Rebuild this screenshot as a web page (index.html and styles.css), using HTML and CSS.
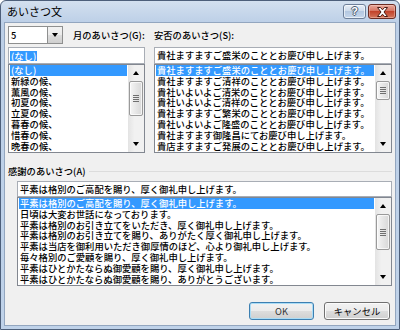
FILE: index.html
```html
<!DOCTYPE html>
<html lang="ja">
<head>
<meta charset="utf-8">
<title>あいさつ文</title>
<link rel="stylesheet" href="styles.css">
</head>
<body>
<div class="window">
  <div class="titlebar">
    <span class="title">あいさつ文</span>
    <div class="caption-btns">
      <div class="cap-btn help"><span class="q">?</span></div>
      <div class="cap-btn close">
        <svg width="13" height="10" viewBox="0 0 13 10"><path d="M1.5 0.5h3l2 2.3 2-2.3h3l-3.5 4.5 3.5 4.5h-3l-2-2.3-2 2.3h-3l3.5-4.5z" fill="#fff" stroke="#4a1a12" stroke-width="1"/></svg>
      </div>
    </div>
  </div>
  <div class="client">
    <div class="top">
      <div class="col">
        <div class="row1">
          <div class="combo"><span class="combo-val">5</span><span class="drop"><i class="tri-down"></i></span></div>
          <span class="label ml">月のあいさつ(G):</span>
        </div>
        <div class="textbox"><span class="sel">(なし)</span></div>
        <div class="listbox">
          <ul class="items">
            <li class="selected">(なし)</li>
            <li>新緑の候、</li>
            <li>薫風の候、</li>
            <li>初夏の候、</li>
            <li>立夏の候、</li>
            <li>暮春の候、</li>
            <li>惜春の候、</li>
            <li>晩春の候、</li>
          </ul>
          <div class="scrollbar">
            <div class="arrow"><i class="tri-up"></i></div>
            <div class="track"><div class="thumb" style="height:35px"><i class="grip"></i></div></div>
            <div class="arrow"><i class="tri-down"></i></div>
          </div>
        </div>
      </div>
      <div class="col">
        <div class="row1">
          <span class="label">安否のあいさつ(S):</span>
        </div>
        <div class="textbox"><span class="txt">貴社ますますご盛栄のこととお慶び申し上げます。</span></div>
        <div class="listbox">
          <ul class="items">
            <li class="selected">貴社ますますご盛栄のこととお慶び申し上げます。</li>
            <li>貴社ますますご清祥のこととお慶び申し上げます。</li>
            <li>貴社いよいよご清栄のこととお慶び申し上げます。</li>
            <li>貴社いよいよご清祥のこととお慶び申し上げます。</li>
            <li>貴社ますますご繁栄のこととお慶び申し上げます。</li>
            <li>貴社いよいよご隆盛のこととお慶び申し上げます。</li>
            <li>貴社ますます御隆昌にてお慶び申し上げます。</li>
            <li>貴店ますますご発展のこととお慶び申し上げます。</li>
          </ul>
          <div class="scrollbar">
            <div class="arrow"><i class="tri-up"></i></div>
            <div class="track"><div class="thumb" style="height:19px"><i class="grip"></i></div></div>
            <div class="arrow"><i class="tri-down"></i></div>
          </div>
        </div>
      </div>
    </div>

    <div class="section-head">
      <span class="label">感謝のあいさつ(A)</span>
      <span class="rule"></span>
    </div>
    <div class="section-body">
      <div class="textbox wide"><span class="txt">平素は格別のご高配を賜り、厚く御礼申し上げます。</span></div>
      <div class="listbox wide">
        <ul class="items">
          <li class="selected">平素は格別のご高配を賜り、厚く御礼申し上げます。</li>
          <li>日頃は大変お世話になっております。</li>
          <li>平素は格別のお引き立てをいただき、厚く御礼申し上げます。</li>
          <li>平素は格別のお引き立てを賜り、ありがたく厚く御礼申し上げます。</li>
          <li>平素は当店を御利用いただき御厚情のほど、心より御礼申し上げます。</li>
          <li>毎々格別のご愛顧を賜り、厚く御礼申し上げます。</li>
          <li>平素はひとかたならぬ御愛顧を賜り、厚く御礼申し上げます。</li>
          <li>平素はひとかたならぬ御愛顧を賜り、ありがとうございます。</li>
        </ul>
        <div class="scrollbar">
          <div class="arrow"><i class="tri-up"></i></div>
          <div class="track"><div class="thumb" style="height:36px"><i class="grip"></i></div></div>
          <div class="arrow"><i class="tri-down"></i></div>
        </div>
      </div>
    </div>

    <div class="buttons">
      <div class="btn default">OK</div>
      <div class="btn">キャンセル</div>
    </div>
  </div>
</div>
</body>
</html>
```
FILE: styles.css
```css
* { box-sizing: border-box; }
html, body { margin: 0; padding: 0; }
body {
  width: 400px;
  height: 330px;
  overflow: hidden;
  background: #ffffff;
  font-family: "Noto Sans CJK JP", "Liberation Sans", sans-serif;
  font-size: 9.3px;
  font-weight: 500;
  color: #000;
}
.window {
  width: 400px;
  height: 330px;
  border: 1px solid #4d5f7a;
  border-radius: 6px 6px 0 0;
  background: linear-gradient(#d3e0ef, #bccfe7 22px, #bfd2e9);
  padding: 0 3px 3px 3px;
  display: flex;
  flex-direction: column;
}
.titlebar {
  height: 21px;
  flex: none;
  display: flex;
  align-items: flex-start;
  justify-content: space-between;
  padding-left: 3px;
}
.title {
  font-size: 11px;
  line-height: 11px;
  font-weight: 400;
  margin-top: 5px;
}
.caption-btns {
  display: flex;
  gap: 2px;
  margin-top: 3px;
}
.cap-btn {
  height: 15px;
  border-radius: 3px;
  display: flex;
  align-items: center;
  justify-content: center;
}
.help {
  width: 23px;
  border: 1px solid #6d7f99;
  background: linear-gradient(#e7eef7, #cbd9ea 50%, #b4c8e1 50%, #c6d7ec);
  box-shadow: inset 0 0 0 1px rgba(255,255,255,0.6);
}
.q {
  font-family: "Liberation Sans", sans-serif;
  font-weight: bold;
  font-size: 11px;
  line-height: 11px;
  color: #fff;
  text-shadow: 1px 0 0 #4b5a70, -1px 0 0 #4b5a70, 0 1px 0 #4b5a70, 0 -1px 0 #4b5a70;
}
.close {
  width: 28px;
  border: 1px solid #6b2b22;
  background: linear-gradient(#e7a99c, #d4705d 50%, #c2432b 50%, #d2765c);
  box-shadow: inset 0 0 0 1px rgba(255,220,210,0.4);
}
.client {
  flex: 1;
  background: #f0f0f0;
  border: 1px solid #93a6bf;
  padding: 3px 3px 0 3px;
  display: flex;
  flex-direction: column;
}
.top {
  display: grid;
  grid-template-columns: 137px 238px;
  column-gap: 9px;
}
.col { display: flex; flex-direction: column; }
.row1 {
  height: 18px;
  display: flex;
  align-items: center;
}
.label { line-height: 11px; white-space: nowrap; }
.ml { margin-left: 10px; }
.combo {
  width: 55px;
  height: 18px;
  border: 1px solid #8e8f8f;
  background: #fff;
  display: flex;
  align-items: center;
}
.combo-val { flex: 1; padding-left: 2px; line-height: 11px; }
.drop {
  width: 15px;
  height: 16px;
  border-left: 1px solid #8e8f8f;
  background: linear-gradient(#f2f2f2, #ebebeb 50%, #dddddd 50%, #cfcfcf);
  display: flex;
  align-items: center;
  justify-content: center;
}
.tri-down, .tri-up {
  display: block;
  width: 0;
  height: 0;
  border-left: 3.5px solid transparent;
  border-right: 3.5px solid transparent;
}
.tri-down { border-top: 4px solid #000; }
.tri-up { border-bottom: 4px solid #000; }
.textbox {
  margin-top: 3px;
  height: 17px;
  border: 1px solid #a8adb5;
  background: #fff;
  padding-left: 1px;
  display: flex;
  align-items: center;
  white-space: nowrap;
  overflow: hidden;
}
.txt { padding-left: 1px; line-height: 11px; }
.sel {
  background: #3399ff;
  color: #fff;
  line-height: 10px;
  padding: 0 1px;
}
.listbox {
  height: 89px;
  border: 1px solid #828790;
  background: #fff;
  display: flex;
}
.items {
  list-style: none;
  margin: 0;
  padding: 0 1px;
  flex: 1;
  min-width: 0;
  overflow: hidden;
}
.items li {
  height: 10.8px;
  line-height: 10.8px;
  padding-left: 1px;
  white-space: nowrap;
}
.items li.selected { background: #3399ff; color: #fff; }
.scrollbar {
  width: 16px;
  flex: none;
  display: flex;
  flex-direction: column;
  background: linear-gradient(to right, #e3e3e3, #f1f1f1 40%, #f1f1f1);
}
.arrow {
  height: 16px;
  display: flex;
  align-items: center;
  justify-content: center;
}
.track { flex: 1; padding: 0 1px; }
.thumb {
  border: 1px solid #9a9a9a;
  border-radius: 2px;
  background: linear-gradient(to right, #f6f6f6, #e6e6e6 50%, #d8d8d8);
  box-shadow: inset 0 0 0 1px rgba(255,255,255,0.7);
  display: flex;
  align-items: center;
  justify-content: center;
}
.grip {
  display: block;
  width: 6px;
  height: 7px;
  background: repeating-linear-gradient(#6f6f6f 0 1px, transparent 1px 2px);
}
.section-head {
  margin-top: 13px;
  display: flex;
  align-items: center;
  gap: 4px;
}
.rule {
  flex: 1;
  height: 0;
  border-top: 1px solid #dcdcdc;
}
.section-body {
  margin-left: 9px;
  margin-top: 1px;
  display: flex;
  flex-direction: column;
}
.textbox.wide { height: 16px; }
.listbox.wide { height: 89px; }
.buttons {
  margin-top: 16px;
  display: flex;
  justify-content: flex-end;
  gap: 10px;
  padding-right: 2px;
}
.btn {
  width: 66px;
  height: 18px;
  border: 1px solid #707070;
  border-radius: 3px;
  background: linear-gradient(#f2f2f2, #ebebeb 50%, #dddddd 50%, #cfcfcf);
  box-shadow: inset 0 0 0 1px #fbfbfb;
  display: flex;
  align-items: center;
  justify-content: center;
  line-height: 11px;
  font-weight: 400;
}
.btn.default {
  width: 65px;
  border-color: #3c7fb1;
  box-shadow: inset 0 0 0 1px #a9dcf6;
  color: #333;
}
```
